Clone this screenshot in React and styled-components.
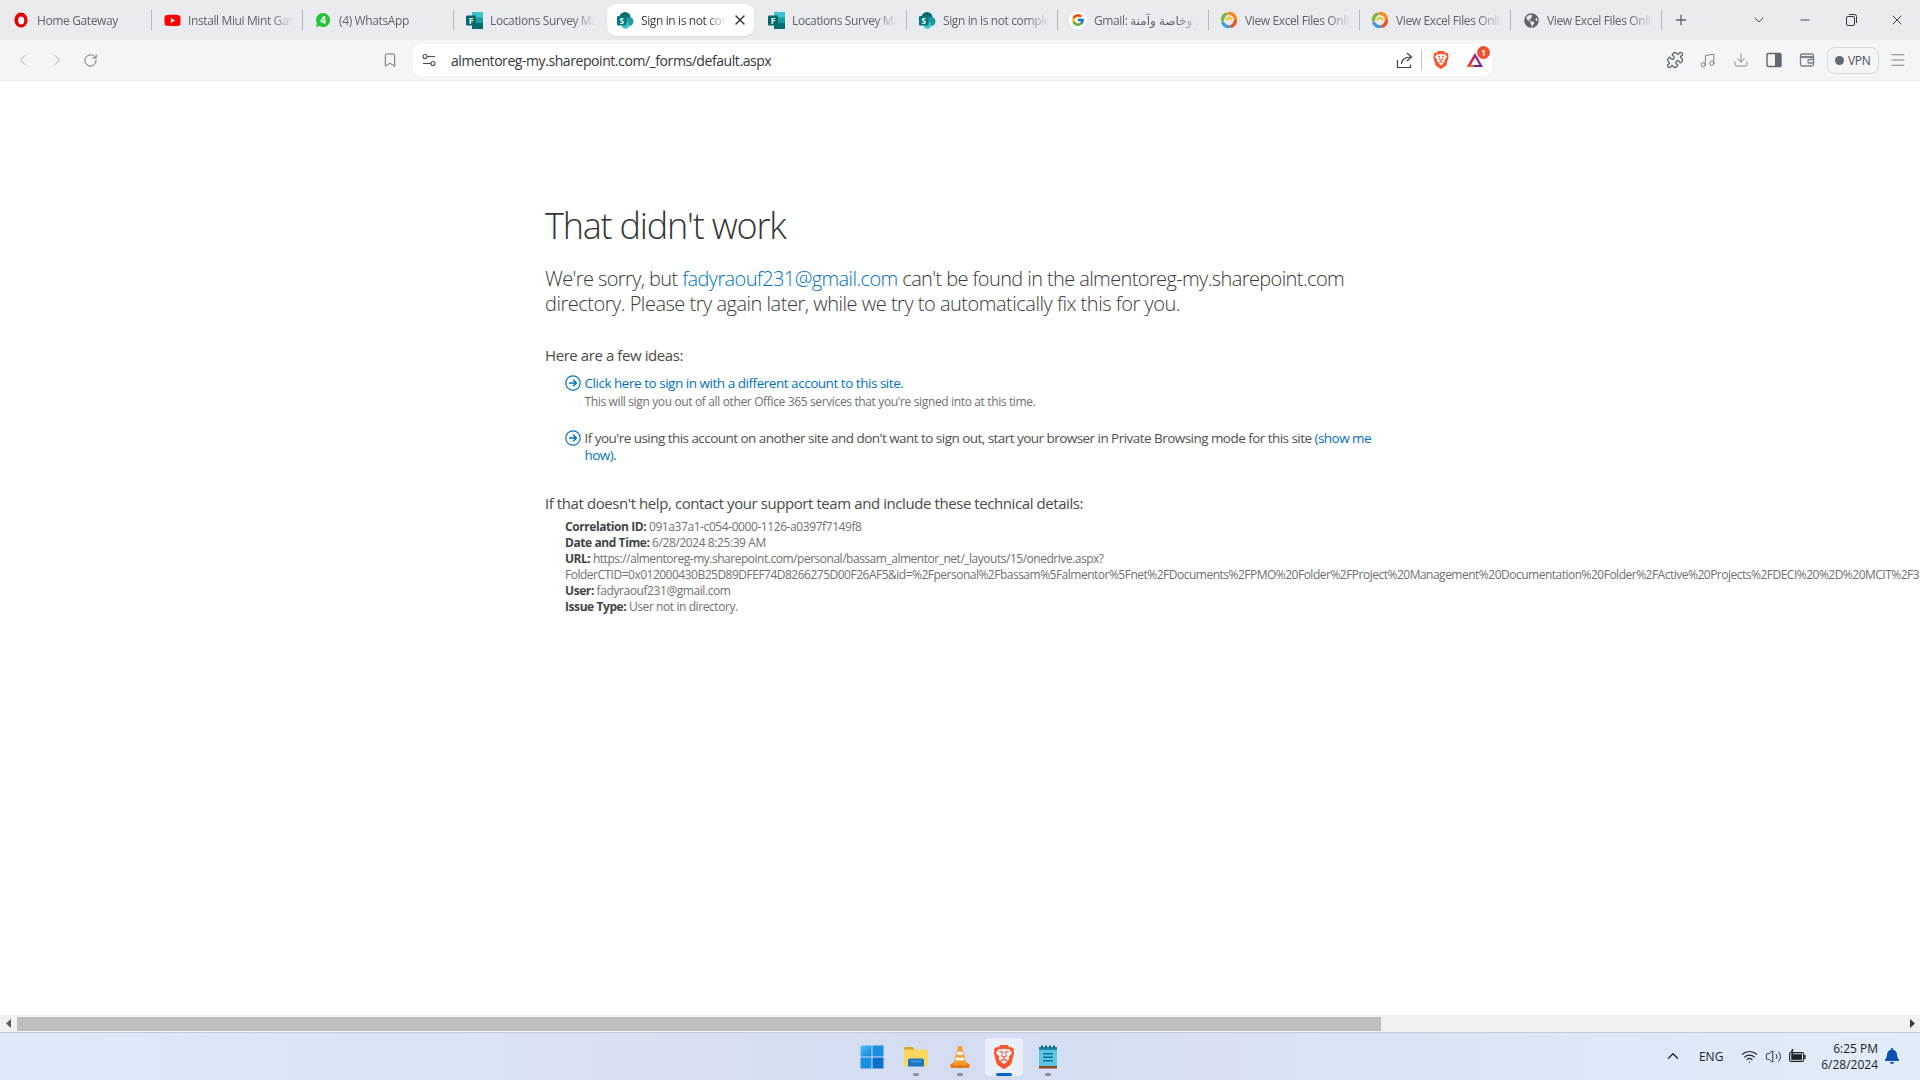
import React from 'react'
import styled, { createGlobalStyle } from 'styled-components'
import {
  ChevronLeft,
  ChevronRight,
  ChevronDown,
  ChevronUp,
  RotateCw,
  Bookmark,
  Plus,
  Minus,
  X,
  Download,
  Music,
  Menu,
  Puzzle,
  Wifi,
  Volume2,
} from 'lucide-react'
import { FaYoutube, FaGlobeAmericas, FaBell } from 'react-icons/fa'
import { FcGoogle } from 'react-icons/fc'
import { SiBrave } from 'react-icons/si'

const GlobalStyle = createGlobalStyle`
  html, body {
    margin: 0;
    padding: 0;
    height: 100%;
    overflow: hidden;
    background: #fff;
  }
  body {
    font-family: "Open Sans", "DejaVu Sans", sans-serif;
  }
`

const Screen = styled.div`
  display: flex;
  flex-direction: column;
  width: 1920px;
  height: 1080px;
  overflow: hidden;
`

/* tab strip */
const TabStrip = styled.div`
  display: flex;
  align-items: center;
  height: 40px;
  padding-left: 1px;
  background: #e9ebef;
  flex: none;
`

const TabCell = styled.div`
  position: relative;
  display: flex;
  align-items: center;
  width: 151px;
  height: 40px;
  flex: none;
  &::after {
    content: '';
    display: ${(p) => (p.$noSep ? 'none' : 'block')};
    position: absolute;
    right: 0;
    top: 10px;
    height: 20px;
    width: 1px;
    background: #b4b7bb;
  }
`

const TabBody = styled.div`
  display: flex;
  align-items: center;
  box-sizing: border-box;
  width: 147px;
  height: 32px;
  margin-left: ${(p) => (p.$active ? '2px' : '0')};
  padding-left: ${(p) => (p.$active ? '9px' : '11px')};
  border-radius: 9px;
  background: ${(p) => (p.$active ? '#fff' : 'transparent')};
  box-shadow: ${(p) => (p.$active ? '0 1px 2px rgba(0, 0, 0, 0.08)' : 'none')};
`

const TabIcon = styled.span`
  display: flex;
  align-items: center;
  justify-content: center;
  width: 18px;
  height: 18px;
  flex: none;
  margin-right: 7px;
  border-radius: 50%;
  background: ${(p) => (p.$disc ? '#fff' : 'transparent')};
`

const TabTitle = styled.span`
  display: block;
  width: ${(p) => (p.$active ? '85px' : '106px')};
  margin-right: ${(p) => (p.$active ? '2px' : '0')};
  overflow: hidden;
  white-space: nowrap;
  font-size: 12px;
  letter-spacing: -0.38px;
  color: ${(p) => (p.$active ? '#3b3f45' : '#5f6368')};
  mask-image: linear-gradient(to right, #000 78%, transparent 100%);
`

const TabClose = styled.span`
  display: flex;
  margin-left: 4px;
  color: #3b3f45;
`

const NewTab = styled.span`
  display: flex;
  margin-left: 11px;
  color: #5f6368;
`

const WindowControls = styled.div`
  display: flex;
  align-items: center;
  margin-left: auto;
  color: #33363a;
`

const WindowButton = styled.span`
  display: flex;
  align-items: center;
  justify-content: center;
  width: 46px;
  height: 40px;
`

/* address bar */
const Toolbar = styled.div`
  display: flex;
  align-items: center;
  height: 40px;
  padding-left: 6px;
  background: #f3f5f7;
  border-bottom: 1px solid #e9ebee;
  flex: none;
`

const ToolButton = styled.span`
  display: flex;
  align-items: center;
  justify-content: center;
  width: ${(p) => p.$w || 34}px;
  height: 32px;
  flex: none;
  color: ${(p) => p.$color || '#5f6873'};
`

const BookmarkSlot = styled(ToolButton)`
  margin-left: 267px;
  margin-right: 6px;
`

const UrlBox = styled.div`
  display: flex;
  align-items: center;
  width: 1079px;
  height: 32px;
  border-radius: 8px;
  background: #fff;
  flex: none;
`

const UrlTune = styled.span`
  display: flex;
  justify-content: center;
  width: 32px;
  margin-right: 6px;
  color: #4a4f55;
`

const UrlText = styled.span`
  font-size: 14px;
  letter-spacing: -0.43px;
  color: #33373c;
`

const UrlActions = styled.div`
  display: flex;
  align-items: center;
  margin-left: auto;
`

const UrlDivider = styled.span`
  width: 1px;
  height: 20px;
  margin: 0 7px 0 8px;
  background: #c6c9cd;
`

const RewardsSlot = styled.span`
  position: relative;
  display: flex;
  align-items: center;
  justify-content: center;
  width: 34px;
  margin-left: 5px;
`

const RewardsBadge = styled.span`
  position: absolute;
  top: -6px;
  right: 2px;
  width: 13px;
  height: 13px;
  border-radius: 50%;
  background: #f4502f;
  color: #fff;
  font-size: 8px;
  font-weight: 700;
  line-height: 13px;
  text-align: center;
`

const ToolbarRight = styled.div`
  display: flex;
  align-items: center;
  margin-left: auto;
  padding-right: 5px;
`

const VpnPill = styled.span`
  display: flex;
  align-items: center;
  gap: 4px;
  box-sizing: border-box;
  width: 52px;
  height: 27px;
  margin: 0 2px 0 4px;
  padding-left: 7px;
  border: 1px solid #d5d9de;
  border-radius: 8px;
  font-size: 12px;
  letter-spacing: -0.3px;
  color: #4a5058;
`

const VpnDot = styled.span`
  display: block;
  width: 9px;
  height: 9px;
  border-radius: 50%;
  background: #5f6873;
`

/* page */
const Page = styled.main`
  flex: 1;
  min-height: 0;
  overflow: hidden;
  padding: 123px 0 0 545px;
  background: #fff;
  color: #444;
`

const Content = styled.div`
  width: 830px;
`

const Heading = styled.h1`
  margin: 0;
  font-size: 36px;
  font-weight: 300;
  line-height: 44px;
  letter-spacing: -1.2px;
  color: #333;
`

const Lead = styled.p`
  margin: 18.25px 0 0;
  font-size: 20px;
  line-height: 25px;
  font-weight: 300;
  letter-spacing: -0.61px;
  color: #3a3a3a;
`

const LeadTail = styled.span`
  letter-spacing: -0.49px;
`

const Link = styled.a`
  color: #0072c6;
  text-decoration: none;
`

const SectionTitle = styled.p`
  margin: ${(p) => p.$top}px 0 0;
  font-size: 15px;
  line-height: 20px;
  font-weight: 400;
  letter-spacing: -0.42px;
  color: #4a4a4a;
`

const Idea = styled.div`
  display: flex;
  margin: ${(p) => p.$top}px 0 0 20px;
`

const IdeaIcon = styled.span`
  display: flex;
  width: 19.5px;
  flex: none;
  color: #0072c6;
`

const IdeaText = styled.div`
  font-size: 13.5px;
  line-height: 17px;
  font-weight: 400;
  letter-spacing: ${(p) => p.$spacing || -0.47}px;
  color: #505050;
`

const IdeaNote = styled.div`
  margin-top: 1px;
  font-size: 12px;
  line-height: 17px;
  font-weight: 400;
  letter-spacing: -0.36px;
  color: #707070;
`

const Details = styled.div`
  margin: 6px 0 0 20px;
`

const DetailRow = styled.div`
  font-size: 12px;
  line-height: 16px;
  font-weight: 400;
  letter-spacing: ${(p) => p.$spacing || -0.42}px;
  white-space: nowrap;
  color: #707070;
  b {
    font-weight: 700;
    color: #444;
  }
`

/* scroll bar */
const ScrollBar = styled.div`
  display: flex;
  align-items: center;
  height: 17px;
  background: #f1f1f1;
  flex: none;
`

const ScrollArrow = styled.span`
  display: flex;
  align-items: center;
  justify-content: center;
  width: 17px;
  height: 17px;
  flex: none;
  margin-left: ${(p) => (p.$end ? 'auto' : '0')};
`

const ScrollThumb = styled.span`
  width: 1364px;
  height: 14px;
  background: #bebebe;
`

/* task bar */
const TaskBar = styled.footer`
  display: grid;
  grid-template-columns: 1fr auto 1fr;
  align-items: center;
  box-sizing: border-box;
  height: 48px;
  border-top: 1px solid #c3cbd6;
  background: linear-gradient(to right, #deeaf8 0%, #d8e2f3 30%, #d3dcf1 50%, #dbe6f5 75%, #e0ecf8 100%);
  flex: none;
`

const TaskApps = styled.div`
  grid-column: 2;
  display: flex;
  align-items: center;
`

const TaskApp = styled.span`
  position: relative;
  display: flex;
  align-items: center;
  justify-content: center;
  width: ${(p) => (p.$active ? '38px' : '44px')};
  height: 38px;
  margin: 0 ${(p) => (p.$active ? '3px' : '0')};
  border-radius: 4px;
  background: ${(p) => (p.$active ? '#eaeff9' : 'transparent')};
  &::after {
    content: '';
    display: ${(p) => (p.$running ? 'block' : 'none')};
    position: absolute;
    bottom: 0;
    left: 50%;
    transform: translateX(-50%);
    width: ${(p) => (p.$active ? '16px' : '6px')};
    height: 3px;
    border-radius: 2px;
    background: ${(p) => (p.$active ? '#0067c0' : '#8a8f98')};
  }
`

const Tray = styled.div`
  grid-column: 3;
  display: flex;
  align-items: center;
  justify-content: flex-end;
  padding-right: 20px;
  color: #1f2328;
`

const TrayIcon = styled.span`
  display: flex;
  justify-content: center;
  width: ${(p) => p.$w || 24}px;
  margin-bottom: 1px;
  flex: none;
`

const TrayLang = styled.span`
  width: 40px;
  margin: 0 6px 0 6px;
  text-align: center;
  font-size: 12px;
`

const Clock = styled.div`
  margin: 0 6px 0 12px;
  font-size: 12px;
  line-height: 16px;
  text-align: right;
  white-space: nowrap;
`

/* logos */
const Vodafone = () => (
  <svg width="16" height="16" viewBox="0 0 16 16">
    <ellipse cx="8" cy="8" rx="6.6" ry="7.6" fill="#e60000" />
    <ellipse cx="8.2" cy="8.6" rx="3" ry="4" fill="#fff" />
    <path d="M7 1.5c2.2-.8 3.6-.4 4.6.4L9.5 5C8.4 4.4 7.4 3.5 7 1.5z" fill="#e60000" />
  </svg>
)

const WhatsApp = () => (
  <svg width="16" height="16" viewBox="0 0 16 16">
    <path d="M8 1a7 7 0 0 0-6 10.6L1 15l3.5-1A7 7 0 1 0 8 1z" fill="#25c33a" />
    <text x="8" y="12" textAnchor="middle" fontSize="10" fontWeight="700" fill="#fff" fontFamily="Open Sans">4</text>
  </svg>
)

const Forms = () => (
  <svg width="17" height="17" viewBox="0 0 17 17">
    <rect x="6" y="0" width="11" height="6" fill="#37c6d0" />
    <rect x="6" y="5.5" width="11" height="6" fill="#1a9ba1" />
    <rect x="6" y="11" width="11" height="6" fill="#036c70" />
    <rect x="0" y="3.5" width="10" height="10" rx="1" fill="#04686b" />
    <text x="5" y="11.5" textAnchor="middle" fontSize="8.5" fontWeight="700" fill="#fff" fontFamily="Open Sans">F</text>
  </svg>
)

const SharePoint = () => (
  <svg width="17" height="17" viewBox="0 0 17 17">
    <circle cx="8" cy="5.5" r="5.5" fill="#036c70" />
    <circle cx="12" cy="9.5" r="4.5" fill="#1a9ba1" />
    <circle cx="8.5" cy="13" r="3.8" fill="#37c6d0" />
    <rect x="0" y="4" width="9.5" height="9.5" rx="1" fill="#03787c" />
    <text x="4.7" y="11.6" textAnchor="middle" fontSize="8" fontWeight="700" fill="#fff" fontFamily="Open Sans">S</text>
  </svg>
)

const Swirl = () => (
  <svg width="18" height="18" viewBox="0 0 18 18" fill="none" strokeWidth="3.4" strokeLinecap="round">
    <path d="M9 2.4a6.6 6.6 0 0 1 6.4 5" stroke="#f58a1f" />
    <path d="M15.5 10a6.6 6.6 0 0 1-4 5.2" stroke="#e8562a" />
    <path d="M9 15.6a6.6 6.6 0 0 1-6-3.4" stroke="#3f9fd8" />
    <path d="M2.4 9a6.6 6.6 0 0 1 3.2-5.6" stroke="#79b83c" />
    <path d="M6.6 8.6a2.6 2.6 0 0 1 4.8-.4" stroke="#f5c21f" strokeWidth="2.2" />
  </svg>
)

const TuneIcon = () => (
  <svg width="14" height="14" viewBox="0 0 14 14" fill="none" stroke="currentColor" strokeWidth="1.1">
    <circle cx="3" cy="3.5" r="2" />
    <path d="M5 3.5h8" />
    <circle cx="11" cy="10.5" r="2" />
    <path d="M1 10.5h8" />
  </svg>
)

const ShareIcon = () => (
  <svg width="17" height="17" viewBox="0 0 17 17" fill="none" stroke="#3c4046" strokeWidth="1.2">
    <path d="M1.5 8v7.5h13v-3" />
    <path d="M5.5 12c0-4.2 3-7 9.5-7" />
    <path d="M11 1l4.5 4-4.5 4" />
  </svg>
)

const RewardsIcon = () => (
  <svg width="18" height="16" viewBox="0 0 18 16">
    <path d="M9 1L1 15h16z" fill="#8e2a8c" />
    <path d="M9 1L1 15h4z" fill="#e3263a" />
    <path d="M9 5.5L13.2 13H4.8z" fill="#fff" />
    <path d="M1 15l2.2-2h11.6l2.2 2z" fill="#662d91" />
    <path d="M1 15l2.2-2H8v2z" fill="#f26a2a" />
  </svg>
)

const SidebarIcon = () => (
  <svg width="16" height="16" viewBox="0 0 16 16">
    <rect x="1" y="1.5" width="14" height="13" rx="1" fill="none" stroke="#5f6873" strokeWidth="1.4" />
    <rect x="9" y="1.5" width="6" height="13" fill="#5f6873" />
  </svg>
)

const WalletIcon = () => (
  <svg width="16" height="16" viewBox="0 0 16 16" fill="none" stroke="#7b838c" strokeWidth="1.3">
    <rect x="1.5" y="2" width="13" height="12" rx="1.5" />
    <path d="M1.5 5h13" strokeWidth="2.2" />
    <rect x="9" y="7.5" width="5.5" height="3.5" rx="1" fill="#f3f5f7" />
  </svg>
)

const WindowsLogo = () => (
  <svg width="24" height="24" viewBox="0 0 24 24">
    <defs>
      <linearGradient id="winA" x1="0" y1="0" x2="1" y2="1">
        <stop offset="0" stopColor="#4fc3f7" />
        <stop offset="1" stopColor="#0f7fd8" />
      </linearGradient>
    </defs>
    <rect x="0.5" y="0.5" width="11" height="11" fill="url(#winA)" />
    <rect x="12.5" y="0.5" width="11" height="11" fill="#1a8fe0" />
    <rect x="0.5" y="12.5" width="11" height="11" fill="#1a8fe0" />
    <rect x="12.5" y="12.5" width="11" height="11" fill="#0a6fcb" />
  </svg>
)

const FolderLogo = () => (
  <svg width="24" height="24" viewBox="0 0 24 24">
    <path d="M0 3.5A1.5 1.5 0 0 1 1.5 2h7l2.5 3H0z" fill="#d9a520" />
    <rect x="0" y="4.5" width="24" height="17" rx="1.5" fill="#fcd760" />
    <path d="M4 15.5a2 2 0 0 1 2-2h12a2 2 0 0 1 2 2v6H4z" fill="#1a75c4" />
    <rect x="7" y="15.5" width="10" height="2" fill="#3d9ae0" />
  </svg>
)

const VlcLogo = () => (
  <svg width="20" height="24" viewBox="0 0 20 24">
    <path d="M0 20l2.5-2h15l2.5 2-1.2 3H1.2z" fill="#e8791a" />
    <path d="M8.2 1h3.6l5 19H3.2z" fill="#f39a2b" />
    <path d="M7.5 6.5h5l1 3.5h-7zM6 12.5h8l.9 3H5.1z" fill="#f4f0e8" />
  </svg>
)

const NotepadLogo = () => (
  <svg width="20" height="24" viewBox="0 0 20 24">
    <rect x="1" y="2" width="18" height="19" fill="#5cc4e4" />
    <rect x="1" y="2" width="18" height="3" fill="#1f8cab" />
    <path d="M3 0.5h2v3H3zM7 0.5h2v3H7zM11 0.5h2v3h-2zM15 0.5h2v3h-2z" fill="#15677f" />
    <path d="M5 8h10v1.6H5zM5 11.5h10v1.6H5zM5 15h10v1.6H5z" fill="#0f6f8d" />
    <rect x="1" y="21" width="18" height="2.5" fill="#8a4b20" />
  </svg>
)

const BatteryIcon = () => (
  <svg width="17" height="14" viewBox="0 0 17 14">
    <rect x="0.6" y="3.6" width="14" height="8.8" rx="1.5" fill="none" stroke="#1f2328" strokeWidth="1.1" />
    <rect x="15.2" y="6" width="1.4" height="4" fill="#1f2328" />
    <rect x="2.2" y="5.2" width="10.8" height="5.6" fill="#1f2328" />
    <path d="M3 0l-1.6 4h1.6L2.2 7 5.4 3H3.6L4.6 0z" fill="#1f2328" />
  </svg>
)

const ArrowCircle = () => (
  <svg width="16" height="16" viewBox="0 0 16 16" fill="none" stroke="currentColor">
    <circle cx="8" cy="8" r="7.2" strokeWidth="1.2" />
    <path d="M4 8h7.4M8.2 4.8L11.4 8l-3.2 3.2" strokeWidth="1.5" />
  </svg>
)

const ArrowLeftTriangle = () => (
  <svg width="6" height="9" viewBox="0 0 6 9"><path d="M5 0v9L0 4.5z" fill="#5b5b5b" /></svg>
)

const ArrowRightTriangle = () => (
  <svg width="6" height="9" viewBox="0 0 6 9"><path d="M1 0v9l5-4.5z" fill="#3a3a3a" /></svg>
)

const tabs = [
  { title: 'Home Gateway', icon: <Vodafone /> },
  { title: 'Install Miui Mint Game Turbo', icon: <FaYoutube size={17} color="#f00" /> },
  { title: '(4) WhatsApp', icon: <WhatsApp /> },
  { title: 'Locations Survey Master', icon: <Forms />, noSep: true },
  { title: 'Sign in is not complete', icon: <SharePoint />, active: true, noSep: true },
  { title: 'Locations Survey Master', icon: <Forms /> },
  { title: 'Sign in is not complete', icon: <SharePoint /> },
  { title: 'Gmail: خدمة بريد وخاصة وآمنة', icon: <FcGoogle size={14} />, disc: true },
  { title: 'View Excel Files Online', icon: <Swirl /> },
  { title: 'View Excel Files Online', icon: <Swirl /> },
  { title: 'View Excel Files Online', icon: <FaGlobeAmericas size={15} color="#5f6368" /> },
]

const longUrl =
  'FolderCTID=0x012000430B25D89DFEF74D8266275D00F26AF5&id=%2Fpersonal%2Fbassam%5Falmentor%5Fnet%2FDocuments%2FPMO%20Folder%2FProject%20Management%20Documentation%20Folder%2FActive%20Projects%2FDECI%20%2D%20MCIT%2F3'

export default function App() {
  return (
    <Screen>
      <GlobalStyle />
      <TabStrip>
        {tabs.map((tab, i) => (
          <TabCell key={i} $noSep={tab.noSep}>
            <TabBody $active={tab.active}>
              <TabIcon $disc={tab.disc}>{tab.icon}</TabIcon>
              <TabTitle $active={tab.active}>{tab.title}</TabTitle>
              {tab.active && (
                <TabClose>
                  <X size={16} strokeWidth={2.4} />
                </TabClose>
              )}
            </TabBody>
          </TabCell>
        ))}
        <NewTab>
          <Plus size={16} />
        </NewTab>
        <WindowControls>
          <WindowButton>
            <ChevronDown size={16} strokeWidth={1.3} />
          </WindowButton>
          <WindowButton>
            <Minus size={14} strokeWidth={1.5} />
          </WindowButton>
          <WindowButton>
            <svg width="11" height="12" viewBox="0 0 11 12" fill="none" stroke="currentColor">
              <rect x="0.5" y="2.5" width="8" height="9" rx="1.5" />
              <path d="M3 .5h5.5a2 2 0 0 1 2 2V9" />
            </svg>
          </WindowButton>
          <WindowButton>
            <X size={16} strokeWidth={1.4} />
          </WindowButton>
        </WindowControls>
      </TabStrip>

      <Toolbar>
        <ToolButton $color="#a9afb6">
          <ChevronLeft size={20} strokeWidth={1.2} />
        </ToolButton>
        <ToolButton $color="#a9afb6">
          <ChevronRight size={20} strokeWidth={1.2} />
        </ToolButton>
        <ToolButton $w={32}>
          <RotateCw size={15} strokeWidth={1.5} />
        </ToolButton>
        <BookmarkSlot>
          <Bookmark size={16} strokeWidth={1.4} />
        </BookmarkSlot>
        <UrlBox>
          <UrlTune>
            <TuneIcon />
          </UrlTune>
          <UrlText>almentoreg-my.sharepoint.com/_forms/default.aspx</UrlText>
          <UrlActions>
            <ShareIcon />
            <UrlDivider />
            <ToolButton $w={24} $color="#fb542b">
              <SiBrave size={18} />
            </ToolButton>
            <RewardsSlot>
              <RewardsIcon />
              <RewardsBadge>1</RewardsBadge>
            </RewardsSlot>
          </UrlActions>
        </UrlBox>
        <ToolbarRight>
          <ToolButton $w={33}>
            <Puzzle size={18} strokeWidth={1.7} />
          </ToolButton>
          <ToolButton $w={33} $color="#7b838c">
            <Music size={17} strokeWidth={1.4} />
          </ToolButton>
          <ToolButton $w={33} $color="#7b838c">
            <Download size={16} strokeWidth={1.4} />
          </ToolButton>
          <ToolButton $w={33}>
            <SidebarIcon />
          </ToolButton>
          <ToolButton $w={33}>
            <WalletIcon />
          </ToolButton>
          <VpnPill>
            <VpnDot />
            VPN
          </VpnPill>
          <ToolButton $w={34} $color="#7b838c">
            <Menu size={18} strokeWidth={1.4} />
          </ToolButton>
        </ToolbarRight>
      </Toolbar>

      <Page>
        <Content>
          <Heading>That didn't work</Heading>
          <Lead>
            We're sorry, but <Link>fadyraouf231@gmail.com</Link> can't be found in the almentoreg-my.sharepoint.com{' '}
            <LeadTail>directory. Please try again later, while we try to automatically fix this for you.</LeadTail>
          </Lead>
          <SectionTitle $top={28.5}>Here are a few ideas:</SectionTitle>
          <Idea $top={10.5}>
            <IdeaIcon>
              <ArrowCircle />
            </IdeaIcon>
            <div>
              <IdeaText>
                <Link>Click here to sign in with a different account to this site.</Link>
              </IdeaText>
              <IdeaNote>This will sign you out of all other Office 365 services that you're signed into at this time.</IdeaNote>
            </div>
          </Idea>
          <Idea $top={19.5}>
            <IdeaIcon>
              <ArrowCircle />
            </IdeaIcon>
            <IdeaText $spacing={-0.54}>
              If you're using this account on another site and don't want to sign out, start your browser in Private
              Browsing mode for this site <Link>(show me how)</Link>.
            </IdeaText>
          </Idea>
          <SectionTitle $top={29.5}>If that doesn't help, contact your support team and include these technical details:</SectionTitle>
          <Details>
            <DetailRow>
              <b>Correlation ID:</b> 091a37a1-c054-0000-1126-a0397f7149f8
            </DetailRow>
            <DetailRow>
              <b>Date and Time:</b> 6/28/2024 8:25:39 AM
            </DetailRow>
            <DetailRow $spacing={-0.48}>
              <b>URL:</b> https://almentoreg-my.sharepoint.com/personal/bassam_almentor_net/_layouts/15/onedrive.aspx?
            </DetailRow>
            <DetailRow $spacing={-0.5}>{longUrl}</DetailRow>
            <DetailRow>
              <b>User:</b> fadyraouf231@gmail.com
            </DetailRow>
            <DetailRow>
              <b>Issue Type:</b> User not in directory.
            </DetailRow>
          </Details>
        </Content>
      </Page>

      <ScrollBar>
        <ScrollArrow>
          <ArrowLeftTriangle />
        </ScrollArrow>
        <ScrollThumb />
        <ScrollArrow $end>
          <ArrowRightTriangle />
        </ScrollArrow>
      </ScrollBar>

      <TaskBar>
        <TaskApps>
          <TaskApp>
            <WindowsLogo />
          </TaskApp>
          <TaskApp $running>
            <FolderLogo />
          </TaskApp>
          <TaskApp $running>
            <VlcLogo />
          </TaskApp>
          <TaskApp $active $running>
            <SiBrave size={24} color="#fb542b" />
          </TaskApp>
          <TaskApp $running>
            <NotepadLogo />
          </TaskApp>
        </TaskApps>
        <Tray>
          <TrayIcon>
            <ChevronUp size={18} strokeWidth={1.7} />
          </TrayIcon>
          <TrayLang>ENG</TrayLang>
          <TrayIcon>
            <Wifi size={17} strokeWidth={1.6} />
          </TrayIcon>
          <TrayIcon>
            <Volume2 size={17} strokeWidth={1.3} />
          </TrayIcon>
          <TrayIcon>
            <BatteryIcon />
          </TrayIcon>
          <Clock>
            6:25 PM
            <br />
            6/28/2024
          </Clock>
          <TrayIcon $w={16}>
            <FaBell size={16} color="#0b4fb3" />
          </TrayIcon>
        </Tray>
      </TaskBar>
    </Screen>
  )
}
